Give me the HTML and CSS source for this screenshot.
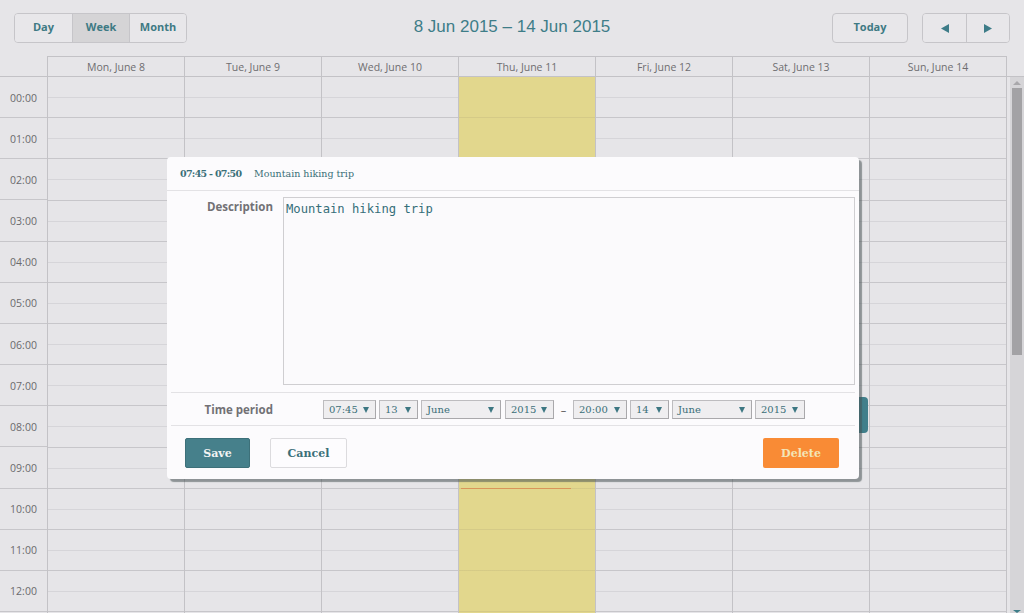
FILE: index.html
```html
<!DOCTYPE html>
<html>
<head>
<meta charset="utf-8">
<link rel="stylesheet" href="styles.css">
</head>
<body>
<div class="app">
  <div class="toolbar">
    <div class="btn-group">
      <button class="tbtn w57">Day</button>
      <button class="tbtn w57 active">Week</button>
      <button class="tbtn w57">Month</button>
    </div>
    <div class="title">8 Jun 2015 – 14 Jun 2015</div>
    <div class="right-tools">
      <button class="tbtn single today">Today</button>
      <div class="btn-group">
        <button class="tbtn nav"><svg width="10" height="11" viewBox="0 0 10 11"><path d="M1 5.5 L9 1 L9 10 Z" fill="#3d7c88"/></svg></button>
        <button class="tbtn nav"><svg width="10" height="11" viewBox="0 0 10 11"><path d="M9 5.5 L1 1 L1 10 Z" fill="#3d7c88"/></svg></button>
      </div>
    </div>
  </div>

  <div class="cal">
    <div class="head-row">
      <div class="head-corner"></div>
      <div class="head-cell">Mon, June 8</div>
      <div class="head-cell">Tue, June 9</div>
      <div class="head-cell">Wed, June 10</div>
      <div class="head-cell">Thu, June 11</div>
      <div class="head-cell">Fri, June 12</div>
      <div class="head-cell">Sat, June 13</div>
      <div class="head-cell last">Sun, June 14</div>
    </div>
    <div class="body-wrap">
      <div class="grid">
        <div class="time-col">
          <div class="time">00:00</div>
          <div class="time">01:00</div>
          <div class="time">02:00</div>
          <div class="time">03:00</div>
          <div class="time">04:00</div>
          <div class="time">05:00</div>
          <div class="time">06:00</div>
          <div class="time">07:00</div>
          <div class="time">08:00</div>
          <div class="time">09:00</div>
          <div class="time">10:00</div>
          <div class="time">11:00</div>
          <div class="time">12:00</div>
        </div>
        <div class="day"></div>
        <div class="day"></div>
        <div class="day"></div>
        <div class="day today-col"><div class="now-line"></div></div>
        <div class="day"></div>
        <div class="day"><div class="event"></div></div>
        <div class="day last"></div>
      </div>
      <div class="scrollbar">
        <div class="sb-up"></div>
        <div class="sb-thumb"></div>
        <div class="sb-down"></div>
      </div>
    </div>
  </div>

  <div class="dialog">
    <div class="dlg-head">
      <span class="dlg-time">07:45 - 07:50</span>
      <span class="dlg-title">Mountain hiking trip</span>
    </div>
    <div class="dlg-body">
      <div class="field desc-row">
        <div class="label desc-label">Description</div>
        <div class="textarea">Mountain hiking trip</div>
      </div>
      <div class="field period-row">
        <div class="label">Time period</div>
        <div class="selects">
          <div class="sel w53">07:45</div>
          <div class="sel w39">13</div>
          <div class="sel w80">June</div>
          <div class="sel w49 gap4">2015</div>
          <div class="dash">–</div>
          <div class="sel w54">20:00</div>
          <div class="sel w39">14</div>
          <div class="sel w80">June</div>
          <div class="sel w50">2015</div>
        </div>
      </div>
      <div class="actions">
        <button class="dbtn save">Save</button>
        <button class="dbtn cancel">Cancel</button>
        <button class="dbtn delete">Delete</button>
      </div>
    </div>
  </div>
</div>
</body>
</html>
```

FILE: styles.css
```css
* { box-sizing: border-box; }
html, body { margin: 0; padding: 0; }
body {
  width: 1024px;
  height: 613px;
  overflow: hidden;
  background: #e6e5e8;
  font-family: "Open Sans", "Liberation Sans", sans-serif;
}
.app { position: relative; width: 1024px; height: 613px; display: flex; flex-direction: column; }

.toolbar {
  height: 56px;
  display: flex;
  align-items: center;
  justify-content: space-between;
  padding: 0 14px 0 14px;
  position: relative;
}
.btn-group { display: flex; border: 1px solid #c6c5c9; border-radius: 4px; overflow: hidden; }
.tbtn {
  font-family: "Open Sans", "Liberation Sans", sans-serif;
  font-weight: 700;
  font-size: 11px;
  color: #3e7a84;
  background: #e8e7ea;
  border: none;
  height: 28px;
  padding: 0 0 3px 0;
  display: flex;
  align-items: center;
  justify-content: center;
}
.tbtn.nav { padding: 0; }
.btn-group .tbtn + .tbtn { border-left: 1px solid #c6c5c9; }
.w57 { width: 57px; }
.tbtn.active { background: #d5d4d6; }
.tbtn.single { border: 1px solid #c6c5c9; border-radius: 4px; height: 30px; }
.today { width: 76px; }
.nav { width: 43px; }
.right-tools { display: flex; gap: 14px; }
.title {
  position: absolute;
  left: 0; right: 0;
  top: 17px;
  text-align: center;
  font-family: "Liberation Sans", "Open Sans", sans-serif;
  font-size: 17px;
  color: #3e7d88;
  pointer-events: none;
}

.cal { flex: 1; display: flex; flex-direction: column; min-height: 0; }
.head-row {
  display: grid;
  grid-template-columns: 47px repeat(7, 137px);
  height: 21px;
  border-bottom: 1px solid #c3c2c6;
}
.head-cell {
  border-top: 1px solid #c3c2c6;
  border-left: 1px solid #c3c2c6;
  font-size: 10.5px;
  color: #6e6d70;
  text-align: center;
  line-height: 20px;
}
.head-cell.last { border-right: 1px solid #c3c2c6; width: 138px; }

.body-wrap { flex: 1; display: flex; min-height: 0; }
.grid { display: flex; width: 1010px; }
.time-col { width: 47px; }
.time {
  height: 41.17px;
  border-bottom: 1px solid #c7c6ca;
  display: flex;
  align-items: center;
  justify-content: center;
  padding-top: 1px;
  font-size: 10.5px;
  color: #6b6a6d;
}
.day {
  width: 137px;
  border-left: 1px solid #c3c2c6;
  position: relative;
  background-image: repeating-linear-gradient(to bottom,
    transparent 0, transparent 20px,
    #d6d5d9 20px, #d6d5d9 21px,
    transparent 21px, transparent 40.17px,
    #c7c6ca 40.17px, #c7c6ca 41.17px);
}
.day.last { width: 138px; border-right: 1px solid #c3c2c6; }
.day.today-col {
  background-color: #e2d78d;
  background-image: repeating-linear-gradient(to bottom,
    transparent 0, transparent 40.17px,
    rgba(120, 110, 90, 0.12) 40.17px, rgba(120, 110, 90, 0.12) 41.17px);
}
.now-line { position: absolute; left: 2px; right: 24px; top: 411px; height: 1px; background: #d9955a; }
.event {
  position: absolute;
  left: 6px; right: 1px;
  top: 320px;
  height: 36px;
  background: #417f8b;
  border-radius: 4px;
}

.scrollbar {
  width: 14px;
  background: #d6d5d8;
  display: flex;
  flex-direction: column;
  align-items: center;
}
.sb-up { width: 0; height: 0; margin-top: 4px; border-left: 4px solid transparent; border-right: 4px solid transparent; border-bottom: 4px solid #a9a8ab; }
.sb-thumb { width: 10px; height: 267px; margin-top: 3px; background: #a3a2a5; }
.sb-down { margin-top: auto; width: 0; height: 0; border-left: 4px solid transparent; border-right: 4px solid transparent; border-top: 3px solid #3e7d88; }

.dialog {
  position: absolute;
  left: 167px;
  top: 157px;
  width: 692px;
  height: 322px;
  background: #fcfbfd;
  border-radius: 4px;
  box-shadow: 3px 3px 1px rgba(70, 80, 82, 0.55);
}
.dlg-head {
  height: 34px;
  border-bottom: 1px solid #e3e2e5;
  display: flex;
  align-items: center;
  padding-left: 13px;
  font-family: "DejaVu Serif", "Liberation Serif", serif;
  font-size: 9.5px;
  color: #3a6f78;
}
.dlg-time { font-weight: 700; width: 74px; letter-spacing: -0.7px; }
.dlg-body { padding: 0 4px; }
.field { display: flex; }
.label {
  width: 112px;
  flex: none;
  padding-right: 10px;
  text-align: right;
  font-size: 11.5px;
  font-weight: 700;
  color: #727175;
}
.desc-row { padding: 6px 0 7px; border-bottom: 1px solid #e3e2e5; }
.desc-label { padding-top: 2px; }
.textarea {
  width: 572px;
  height: 188px;
  border: 1px solid #cfced1;
  background: #fbfafc;
  font-family: "DejaVu Sans Mono", "Liberation Mono", monospace;
  font-size: 12.2px;
  color: #356e79;
  padding: 4px 2px;
}
.period-row { height: 33px; align-items: center; border-bottom: 1px solid #e3e2e5; }
.selects { display: flex; align-items: center; margin-left: 40px; gap: 3px; }
.sel {
  position: relative;
  height: 19px;
  border: 1px solid #bdbcbf;
  border-right-color: #a9a8ab;
  border-bottom-color: #a9a8ab;
  background: #efeef0;
  font-family: "DejaVu Serif", "Liberation Serif", serif;
  font-size: 10px;
  color: #3b6f79;
  line-height: 17px;
  padding-left: 5px;
}
.sel::after {
  content: "";
  position: absolute;
  right: 6px;
  top: 6px;
  border-left: 3px solid transparent;
  border-right: 3px solid transparent;
  border-top: 6px solid #3d7782;
}
.w53 { width: 53px; }
.w39 { width: 39px; }
.w80 { width: 80px; }
.w49 { width: 49px; }
.w50 { width: 50px; }
.w54 { width: 54px; }
.gap4 { margin-left: 1px; }
.dash { width: 13px; text-align: center; font-size: 11px; color: #555; }

.actions { display: flex; align-items: center; padding: 12px 16px 0 14px; }
.dbtn {
  height: 30px;
  border: none;
  border-radius: 2px;
  font-family: "DejaVu Serif", "Liberation Serif", serif;
  font-weight: 700;
  font-size: 11px;
  padding: 0;
}
.save { width: 65px; background: #46808b; color: #f4f4f4; border: 1px solid #3d7079; }
.cancel { width: 77px; margin-left: 20px; background: #fdfcfe; color: #3b6f79; border: 1px solid #dcdbde; }
.delete { width: 76px; margin-left: auto; background: #f98b35; color: #f3e5b8; }
```
